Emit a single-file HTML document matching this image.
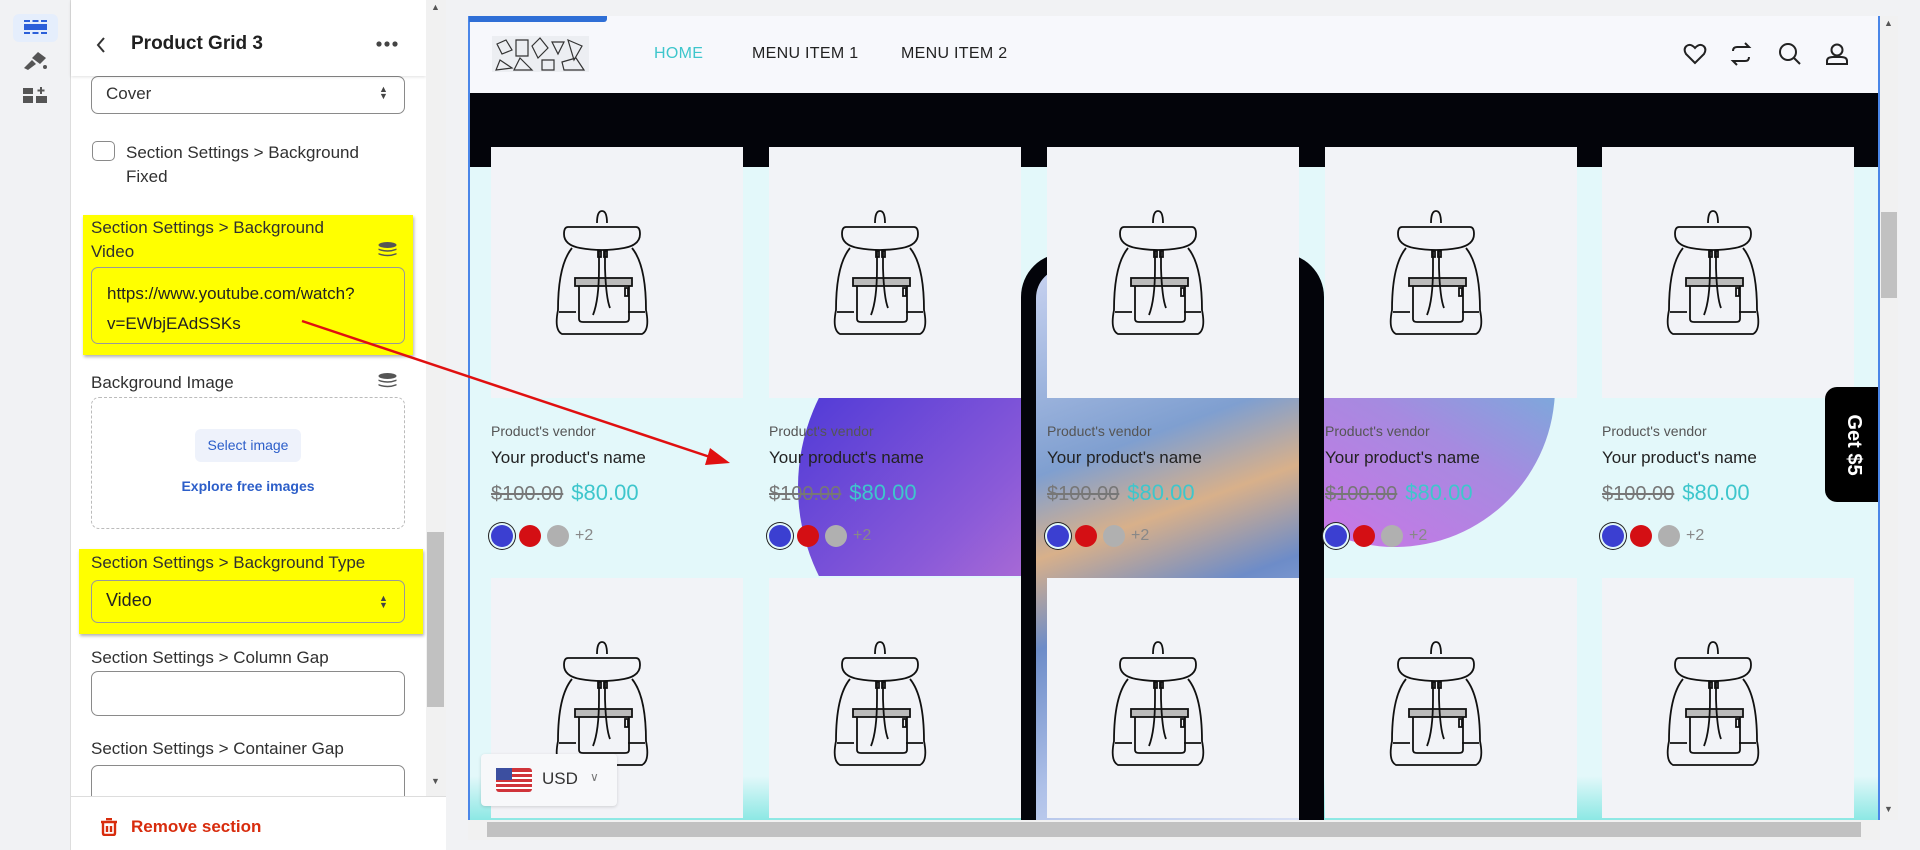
<!DOCTYPE html>
<html><head><meta charset="utf-8">
<style>
*{box-sizing:border-box;margin:0;padding:0}
body{width:1920px;height:850px;overflow:hidden;background:#f1f2f4;font-family:"Liberation Sans",sans-serif;position:relative}
.abs{position:absolute}
.lbl{position:absolute;left:91px;font-size:17px;color:#303030;line-height:24px}
.inp{position:absolute;left:91px;width:314px;border:1px solid #8a8a8a;border-radius:7px;background:#fff}
.card{position:absolute;width:252px}
.img{height:251px;background:#f2f3f7;position:relative}
.img svg{position:absolute;left:63px;top:63px}
.info{height:178px;position:relative}
.vend{position:absolute;top:25px;font-size:14px;color:#555}
.name{position:absolute;top:50px;font-size:17px;color:#222}
.pr{position:absolute;top:82px;font-size:22px;white-space:nowrap}
.pr s{color:#777;font-size:20px}
.pr b{font-weight:normal;color:#3ec6cc;margin-left:8px}
.sw{position:absolute;top:127px;display:flex;align-items:center;gap:6px;font-size:16px;color:#888}
.sw i{display:block;width:22px;height:22px;border-radius:50%}
.nav{font-size:16px;color:#222;position:absolute;top:45px;letter-spacing:.3px}
</style></head><body>
<!-- left icon bar -->
<div class="abs" style="left:0;top:0;width:71px;height:850px;background:#f1f2f4;border-right:1px solid #ddd"></div>
<div class="abs" style="left:13px;top:14px;width:45px;height:28px;background:#e5eefc;border-radius:6px"></div>
<div class="abs" style="left:24px;top:20px;width:23px;height:14px;border-top:2px dashed #2b5fd9;border-bottom:2px dashed #2b5fd9"></div>
<div class="abs" style="left:24px;top:24px;width:23px;height:6px;background:#2b5fd9"></div>
<svg class="abs" style="left:22px;top:52px" width="26" height="18" viewBox="0 0 26 18"><path d="M2 16 L10 8 L14 12 L6 18Z M10 6 L16 0 L24 6 L18 12Z" fill="#555"/><circle cx="23" cy="15" r="2" fill="#555"/></svg>
<svg class="abs" style="left:23px;top:87px" width="24" height="16" viewBox="0 0 24 16"><rect x="0" y="1" width="10" height="6" fill="#555"/><rect x="0" y="9" width="10" height="7" fill="#555"/><rect x="13" y="9" width="11" height="7" fill="#555"/><path d="M18 0V7M14.5 3.5H21.5" stroke="#555" stroke-width="2"/></svg>
<!-- settings panel -->
<div class="abs" style="left:71px;top:0;width:355px;height:850px;background:#fff"></div>
<div class="abs" style="left:83px;top:215px;width:330px;height:140px;background:#ffff00;box-shadow:1px 2px 3px rgba(0,0,0,.3)"></div>
<div class="lbl" style="top:216px;width:280px">Section Settings &gt; Background Video</div>
<svg class="abs" style="left:378px;top:242px" width="19" height="15" viewBox="0 0 19 15"><ellipse cx="9.5" cy="3" rx="9" ry="3" fill="#555"/><path d="M.5 6.5Q9.5 10 18.5 6.5V8Q9.5 11.5 .5 8Z M.5 11Q9.5 14.5 18.5 11V12.5Q9.5 16 .5 12.5Z" fill="#555"/></svg>
<div class="inp" style="top:267px;height:77px;background:#ffff00;border-color:#999"></div>
<div class="abs" style="left:107px;top:279px;font-size:17px;line-height:30px;color:#222">https://www.youtube.com/watch?<br>v=EWbjEAdSSKs</div>
<div class="inp" style="top:76px;height:38px"></div>
<div class="abs" style="left:106px;top:82px;font-size:17px;color:#333;line-height:24px">Cover</div>
<div class="abs" style="left:379px;top:86px;font-size:9px;color:#444;line-height:7px">▲<br>▼</div>
<div class="abs" style="left:92px;top:141px;width:23px;height:20px;border:1.5px solid #8a8a8a;border-radius:5px"></div>
<div class="lbl" style="left:126px;top:141px;width:270px">Section Settings &gt; Background<br>Fixed</div>
<div class="abs" style="left:71px;top:0;width:355px;height:76px;background:#fff;box-shadow:0 1px 3px rgba(0,0,0,.12)"></div>
<svg class="abs" style="left:95px;top:36px" width="12" height="18" viewBox="0 0 12 18"><path d="M9 2 L3 9 L9 16" stroke="#333" stroke-width="2" fill="none"/></svg>
<div class="abs" style="left:131px;top:33px;font-size:19px;font-weight:bold;color:#202020">Product Grid 3</div>
<svg class="abs" style="left:376px;top:41px" width="22" height="6"><circle cx="3" cy="3" r="2.6" fill="#444"/><circle cx="11" cy="3" r="2.6" fill="#444"/><circle cx="19" cy="3" r="2.6" fill="#444"/></svg>
<!-- background image -->
<div class="lbl" style="top:371px">Background Image</div>
<svg class="abs" style="left:378px;top:373px" width="19" height="15" viewBox="0 0 19 15"><ellipse cx="9.5" cy="3" rx="9" ry="3" fill="#555"/><path d="M.5 6.5Q9.5 10 18.5 6.5V8Q9.5 11.5 .5 8Z M.5 11Q9.5 14.5 18.5 11V12.5Q9.5 16 .5 12.5Z" fill="#555"/></svg>
<div class="abs" style="left:91px;top:397px;width:314px;height:132px;border:1.5px dashed #bbb;border-radius:8px"></div>
<div class="abs" style="left:195px;top:429px;width:106px;height:33px;background:#eef2fb;border-radius:6px;color:#2c5ec9;font-size:14px;text-align:center;line-height:33px">Select image</div>
<div class="abs" style="left:91px;top:478px;width:314px;text-align:center;color:#2c5ec9;font-size:14px;font-weight:bold">Explore free images</div>
<!-- yellow 2 -->
<div class="abs" style="left:79px;top:549px;width:344px;height:85px;background:#ffff00;box-shadow:1px 2px 3px rgba(0,0,0,.3)"></div>
<div class="lbl" style="top:551px">Section Settings &gt; Background Type</div>
<div class="inp" style="top:580px;height:43px;background:#ffff00;border-color:#999"></div>
<div class="abs" style="left:106px;top:590px;font-size:18px;color:#222">Video</div>
<div class="abs" style="left:379px;top:595px;font-size:9px;color:#444;line-height:7px">▲<br>▼</div>
<div class="lbl" style="top:646px">Section Settings &gt; Column Gap</div>
<div class="inp" style="top:671px;height:45px"></div>
<div class="lbl" style="top:737px">Section Settings &gt; Container Gap</div>
<div class="inp" style="top:765px;height:40px"></div>
<!-- footer -->
<div class="abs" style="left:71px;top:796px;width:375px;height:54px;background:#fff;border-top:1px solid #ddd"></div>
<svg class="abs" style="left:100px;top:818px" width="18" height="18" viewBox="0 0 18 18"><path d="M6 1H12M1 4H17M3 4V15Q3 17 5 17H13Q15 17 15 15V4M7 8V14M11 8V14" stroke="#d82c0d" stroke-width="2.4" fill="none"/></svg>
<div class="abs" style="left:131px;top:817px;font-size:17px;font-weight:bold;color:#d82c0d">Remove section</div>
<!-- panel scrollbar -->
<div class="abs" style="left:426px;top:0;width:20px;height:796px;background:#f1f1f1"></div>
<div class="abs" style="left:427px;top:532px;width:17px;height:175px;background:#c1c1c1"></div>
<div class="abs" style="left:431px;top:2px;font-size:9px;color:#555">▲</div>
<div class="abs" style="left:431px;top:776px;font-size:9px;color:#555">▼</div>

<!-- PREVIEW -->
<div class="abs" style="left:468px;top:16px;width:1412px;height:804px;background:#e3f8fa;overflow:hidden;border-left:2px solid #4a86e8;border-right:2px solid #4a86e8">
  <div class="abs" style="left:0;top:77px;width:1412px;height:74px;background:#03040a"></div>
  <div class="abs" style="left:0;top:760px;width:1412px;height:44px;background:linear-gradient(#e3f8fa,#8ce8e4)"></div>
  <div class="abs" style="left:0;top:382px;width:1412px;height:178px;overflow:hidden">
    <div class="abs" style="left:328px;top:-111px;width:400px;height:400px;border-radius:50%;background:linear-gradient(135deg,#3b2fd6,#8a5ad8 50%,#f08fd0)"></div>
    <div class="abs" style="left:765px;top:-171px;width:320px;height:320px;border-radius:50%;background:linear-gradient(210deg,#3ed6d4,#a68ae0 55%,#d470e8)"></div>
  </div>
  <div class="abs" style="left:551px;top:237px;width:303px;height:620px;border-radius:44px;background:#03040a"></div>
  <div class="abs" style="left:566px;top:252px;width:263px;height:600px;border-radius:30px;background:linear-gradient(160deg,#c8d2f0,#7f9fd0 30%,#d8b08a 42%,#6d8cc8 55%,#aec0e8 75%,#e8ecfa)"></div>
</div>
<!-- nav -->
<div class="abs" style="left:470px;top:16px;width:1408px;height:77px;background:#f7f8fc"></div>
<div class="abs" style="left:469px;top:16px;width:138px;height:6px;background:#2f6fd6;border-radius:0 0 3px 0"></div>
<svg class="abs" style="left:492px;top:36px" width="97" height="36" viewBox="0 0 97 36"><rect width="97" height="36" fill="#eceef2"/><path d="M5 8L14 4L20 14L10 18Z M24 4H36V20H24Z M40 10L48 2L56 12L46 22Z M60 6H72L66 18Z M76 4L90 10L82 24Z M8 24L20 32L4 34Z M28 22L40 34H22Z M50 24H62V34H50Z M70 26L84 22L92 34H72Z" stroke="#333" fill="none" stroke-width="1.2"/></svg>
<div class="nav" style="left:654px;color:#3ec6cc">HOME</div>
<div class="nav" style="left:752px">MENU ITEM 1</div>
<div class="nav" style="left:901px">MENU ITEM 2</div>
<svg class="abs" style="left:1683px;top:42px" width="170" height="24" viewBox="0 0 170 24" fill="none" stroke="#222" stroke-width="2">
<path d="M12 21L3 12Q0 7 3.5 4Q7.5 1 12 6Q16.5 1 20.5 4Q24 7 21 12Z"/>
<path d="M50 9Q50 5 54 5H66L62 1M66 15Q66 19 62 19H50L54 23"/>
<circle cx="105" cy="10" r="8"/><path d="M111 16L117 22"/>
<circle cx="154" cy="8" r="5.5"/><path d="M144 22V19Q144 15 150 15H158Q164 15 164 19V22Z"/>
</svg>
<!-- cards -->
<div id="cards"></div>
<script>
var bp='<svg width="96" height="126" viewBox="0 0 96 126" fill="none" stroke="#111" stroke-width="1.8"><path d="M43 13Q43 1 48 1Q53 1 53 13"/><path d="M14 17H82Q86 17 86 24Q86 35 70 38Q48 42 26 38Q10 35 10 24Q10 17 14 17Z"/><path d="M18 38Q4 55 4 100Q0 120 8 124H88Q96 120 92 100Q92 55 78 38"/><path d="M5 102H22M74 102H91"/><rect x="21" y="68" width="57" height="8" fill="#bbb"/><path d="M25 76V109Q25 112 29 112H71Q75 112 75 109V76"/><path d="M45 40V58Q45 90 39 105M51 40V58Q52 88 56 98"/><path d="M44 41H47V47H44ZM50 41H53V47H50Z"/><path d="M71 78V86H74V78Z"/></svg>';
var xs=[491,769,1047,1325,1602],h='';
xs.forEach(function(x){
h+='<div class="card" style="left:'+x+'px;top:147px"><div class="img">'+bp+'</div><div class="info"><div class="vend">Product\'s vendor</div><div class="name">Your product\'s name</div><div class="pr"><s>$100.00</s><b>$80.00</b></div><div class="sw"><i style="background:#3b3fd1;box-shadow:0 0 0 2px #e3f8fa,0 0 0 3px #222"></i><i style="background:#d40f14"></i><i style="background:#b0b0b0"></i><span>+2</span></div></div></div>';
h+='<div class="card" style="left:'+x+'px;top:578px"><div class="img" style="height:240px">'+bp+'</div></div>';
});
document.getElementById('cards').innerHTML=h;
</script>
<!-- get $5 -->
<div class="abs" style="left:1825px;top:387px;width:53px;height:115px;background:#000;border-radius:12px 0 0 12px"></div>
<div class="abs" style="left:1806px;top:432px;width:92px;height:26px;transform:rotate(90deg);color:#fff;font-size:20px;text-align:center;font-weight:bold">Get $5</div>
<!-- USD -->
<div class="abs" style="left:481px;top:754px;width:136px;height:52px;background:#f7f8fa;border-radius:4px;box-shadow:0 1px 3px rgba(0,0,0,.15)"></div>
<svg class="abs" style="left:496px;top:768px" width="36" height="24" viewBox="0 0 36 24"><rect width="36" height="24" rx="3" fill="#d0343a"/><path d="M0 5H36M0 10H36M0 15H36M0 20H36" stroke="#fff" stroke-width="2"/><rect width="16" height="12" fill="#3c4fa0"/></svg>
<div class="abs" style="left:542px;top:769px;font-size:17px;color:#333">USD</div>
<div class="abs" style="left:590px;top:770px;font-size:12px;color:#777">∨</div>
<!-- right scrollbar -->
<div class="abs" style="left:1880px;top:16px;width:18px;height:804px;background:#f1f1f1"></div>
<div class="abs" style="left:1881px;top:212px;width:16px;height:86px;background:#c1c1c1"></div>
<div class="abs" style="left:1884px;top:18px;font-size:9px;color:#555">▲</div>
<div class="abs" style="left:1884px;top:804px;font-size:9px;color:#555">▼</div>
<!-- bottom scrollbar -->
<div class="abs" style="left:468px;top:820px;width:1412px;height:20px;background:#f1f1f1"></div>
<div class="abs" style="left:487px;top:822px;width:1374px;height:15px;background:#c1c1c1"></div>
<!-- red arrow -->
<svg class="abs" style="left:0;top:0" width="1920" height="850"><path d="M302 321L716 459" stroke="#e01010" stroke-width="2.5"/><path d="M730 463L710 448L705 465Z" fill="#e01010"/></svg>
</body></html>
